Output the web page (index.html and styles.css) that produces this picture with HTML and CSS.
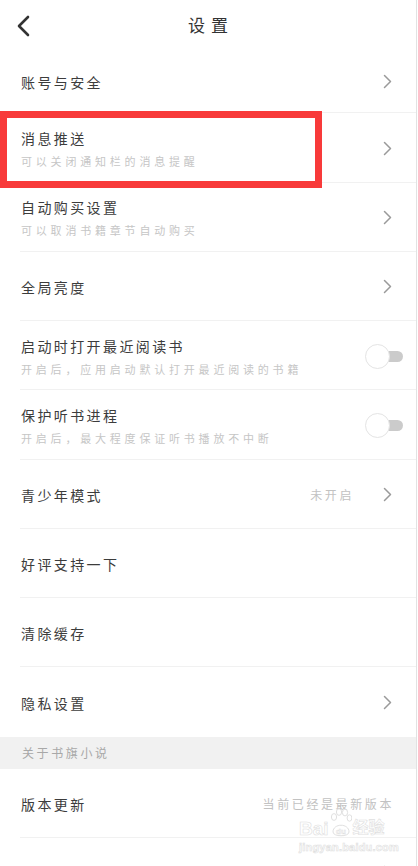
FILE: index.html
```html
<!DOCTYPE html>
<html>
    <head>
        <meta charset="UTF-8">
        <meta name="viewport" content="width=device-width, initial-scale=1.0">
        <title>设置</title>
        <link rel="stylesheet" href="styles.css">
    </head>
    <body>
        <div class="page">
            <header class="topbar">
                <button class="back">
                    <svg width="14" height="22" viewBox="0 0 14 22"><polyline points="12,2 3,11 12,20" fill="none" stroke="#333" stroke-width="2.6" stroke-linecap="round" stroke-linejoin="round"/></svg>
                </button>
                <h1 class="topbar-title">设置</h1>
            </header>

            <ul class="list">
                <li class="row first">
                    <div class="text"><span class="title">账号与安全</span></div>
                    <svg class="arrow" width="9" height="15" viewBox="0 0 9 15"><polyline points="1.5,1.5 7.5,7.5 1.5,13.5"/></svg>
                </li>
                <li class="row">
                    <div class="mark"></div>
                    <div class="text">
                        <span class="title">消息推送</span>
                        <span class="sub">可以关闭通知栏的消息提醒</span>
                    </div>
                    <svg class="arrow" width="9" height="15" viewBox="0 0 9 15"><polyline points="1.5,1.5 7.5,7.5 1.5,13.5"/></svg>
                </li>
                <li class="row">
                    <div class="text">
                        <span class="title">自动购买设置</span>
                        <span class="sub">可以取消书籍章节自动购买</span>
                    </div>
                    <svg class="arrow" width="9" height="15" viewBox="0 0 9 15"><polyline points="1.5,1.5 7.5,7.5 1.5,13.5"/></svg>
                </li>
                <li class="row">
                    <div class="text"><span class="title">全局亮度</span></div>
                    <svg class="arrow" width="9" height="15" viewBox="0 0 9 15"><polyline points="1.5,1.5 7.5,7.5 1.5,13.5"/></svg>
                </li>
                <li class="row">
                    <div class="text">
                        <span class="title">启动时打开最近阅读书</span>
                        <span class="sub">开启后，应用启动默认打开最近阅读的书籍</span>
                    </div>
                    <div class="switch"><span class="track"></span><span class="knob"></span></div>
                </li>
                <li class="row">
                    <div class="text">
                        <span class="title">保护听书进程</span>
                        <span class="sub">开启后，最大程度保证听书播放不中断</span>
                    </div>
                    <div class="switch"><span class="track"></span><span class="knob"></span></div>
                </li>
                <li class="row">
                    <div class="text"><span class="title">青少年模式</span></div>
                    <span class="value state">未开启</span>
                    <svg class="arrow" width="9" height="15" viewBox="0 0 9 15"><polyline points="1.5,1.5 7.5,7.5 1.5,13.5"/></svg>
                </li>
                <li class="row">
                    <div class="text"><span class="title">好评支持一下</span></div>
                </li>
                <li class="row">
                    <div class="text"><span class="title">清除缓存</span></div>
                </li>
                <li class="row last">
                    <div class="text"><span class="title">隐私设置</span></div>
                    <svg class="arrow" width="9" height="15" viewBox="0 0 9 15"><polyline points="1.5,1.5 7.5,7.5 1.5,13.5"/></svg>
                </li>
            </ul>

            <div class="section">关于书旗小说</div>

            <ul class="list">
                <li class="row">
                    <div class="text"><span class="title">版本更新</span></div>
                    <span class="value">当前已经是最新版本</span>
                </li>
                <li class="row">
                    <div class="text"><span class="title">关于我们</span></div>
                    <svg class="arrow" width="9" height="15" viewBox="0 0 9 15"><polyline points="1.5,1.5 7.5,7.5 1.5,13.5"/></svg>
                </li>
            </ul>

            <div class="watermark">
                <div class="wm-line">
                    <span>Bai</span>
                    <svg class="paw" width="22" height="30" viewBox="0 0 22 30">
                        <ellipse cx="4" cy="9" rx="2.6" ry="3.4"/>
                        <ellipse cx="9" cy="4" rx="2.6" ry="3.4"/>
                        <ellipse cx="15" cy="4.5" rx="2.6" ry="3.4"/>
                        <ellipse cx="19.5" cy="10" rx="2.4" ry="3.2"/>
                        <path d="M3 24 C3 15 19 15 19 24 C19 29 3 29 3 24 Z"/>
                        <text x="11" y="26" text-anchor="middle">du</text>
                    </svg>
                    <span>经验</span>
                </div>
                <div class="wm-url">jingyan.baidu.com</div>
            </div>
        </div>
    </body>
</html>
```

FILE: styles.css
```css
html, body {
    margin: 0;
    padding: 0;
    background: #fff;
}

body {
    font-family: "Noto Sans CJK SC", "Noto Sans", sans-serif;
    overflow: hidden;
}

.page {
    position: relative;
    width: 416px;
    min-height: 866px;
    border-right: 1px solid #e2e2e2;
    background: #fff;
}

/* top bar */
.topbar {
    height: 44px;
    display: flex;
    align-items: center;
    justify-content: center;
    position: relative;
}

.back {
    position: absolute;
    left: 16px;
    top: 15px;
    padding: 0;
    border: none;
    background: none;
    display: flex;
}

.topbar-title {
    margin: 0;
    padding: 4px 0 0 6px;
    font-size: 17px;
    font-weight: normal;
    letter-spacing: 6px;
    color: #333;
}

/* list */
.list {
    list-style: none;
    margin: 0;
    padding: 0;
}

.row {
    position: relative;
    height: 69.25px;
    margin-left: 20px;
    padding: 2px 24px 0 1px;
    box-sizing: border-box;
    display: flex;
    align-items: center;
    border-bottom: 1px solid #f1f1f1;
}

.row.first {
    padding-top: 7px;
}

.row.last {
    border-bottom: none;
}

.text {
    flex: 1;
    display: flex;
    flex-direction: column;
    gap: 5px;
}

.title {
    font-size: 14px;
    line-height: 20px;
    letter-spacing: 2.4px;
    color: #3c3c3c;
}

.sub {
    font-size: 11px;
    line-height: 16px;
    letter-spacing: 3.8px;
    color: #c6c6c6;
}

.arrow polyline {
    fill: none;
    stroke: #9a9a9a;
    stroke-width: 1.5;
    stroke-linecap: round;
    stroke-linejoin: round;
}

.value {
    font-size: 12px;
    letter-spacing: 2.6px;
    color: #c2c2c2;
    margin-right: -2px;
}

.value.state {
    margin-right: 29px;
}

/* switch */
.switch {
    position: relative;
    width: 38px;
    height: 25px;
    margin-right: -11px;
}

.track {
    position: absolute;
    right: 0;
    top: 7px;
    width: 28px;
    height: 11px;
    border-radius: 6px;
    background: #cbcbcb;
}

.knob {
    position: absolute;
    left: 0;
    top: 0;
    width: 25px;
    height: 25px;
    box-sizing: border-box;
    border-radius: 50%;
    border: 1px solid #e4e4e4;
    background: #fff;
}

/* section header */
.section {
    height: 32px;
    padding-left: 22px;
    display: flex;
    align-items: center;
    background: #f1f1f1;
    font-size: 12px;
    letter-spacing: 2.6px;
    color: #a8a8a8;
}

/* red annotation box */
.mark {
    position: absolute;
    left: -20px;
    top: -2px;
    width: 322px;
    height: 77px;
    box-sizing: border-box;
    border: 7px solid #f83a3a;
}

/* watermark */
.watermark {
    position: absolute;
    left: 299px;
    top: 806px;
    color: transparent;
    -webkit-text-stroke: 0.6px #e0e0e0;
    font-family: "Liberation Sans", Arial, sans-serif;
}

.wm-line {
    display: flex;
    align-items: flex-end;
    height: 34px;
    font-size: 19px;
    font-weight: bold;
}

.wm-line span:last-child {
    font-family: "Noto Sans CJK SC", sans-serif;
    font-size: 16px;
    margin-bottom: 2px;
}

.paw {
    margin: 0 1px 2px 1px;
}

.paw ellipse, .paw path {
    fill: none;
    stroke: #e0e0e0;
    stroke-width: 1;
}

.paw text {
    font-size: 8px;
    font-weight: bold;
    fill: none;
    stroke: #e0e0e0;
    stroke-width: 0.5;
}

.wm-url {
    font-size: 11px;
    font-weight: bold;
    letter-spacing: 0.2px;
    margin-top: 1px;
}
```
